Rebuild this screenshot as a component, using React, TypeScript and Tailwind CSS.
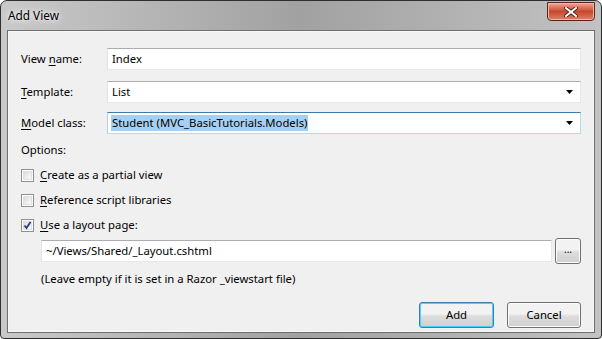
import React from 'react'

const font = { fontFamily: '"Noto Sans", "Open Sans", sans-serif' }

const Key = ({ children }: { children: React.ReactNode }) => <span className="underline underline-offset-2">{children}</span>

const Arrow = () => (
  <svg width="7" height="4" viewBox="0 0 7 4" className="absolute right-[7px] top-1/2 -translate-y-1/2">
    <path d="M0 0h7L3.5 4z" fill="#000" />
  </svg>
)

const Field = ({ label, children, focused, combo }: { label: React.ReactNode; children: React.ReactNode; focused?: boolean; combo?: boolean }) => (
  <div className="flex items-center h-[22px]">
    <div className="w-[86px] shrink-0">{label}</div>
    <div
      className={
        'relative flex-1 h-[22px] bg-white flex items-center pl-[4px] border ' +
        (focused
          ? 'border-[#3d7bad] border-b-[#b7d9ed] border-r-[#b7d9ed] border-l-[#b5cfe7]'
          : 'border-[#abadb3] border-b-[#e3e9ef] border-r-[#e3e9ef] border-l-[#e2e3ea]')
      }
    >
      {children}
      {combo && <Arrow />}
    </div>
  </div>
)

const Check = ({ checked, children }: { checked?: boolean; children: React.ReactNode }) => (
  <div className="flex items-center h-[25px] gap-[6px]">
    <div className="w-[13px] h-[13px] border border-[#8e8f8f] bg-white p-[1px]">
      <div className="w-full h-full bg-gradient-to-br from-[#dcdcdc] to-[#fbfbfb] border border-[#e0e0e0] relative">
        {checked && (
          <svg width="11" height="11" viewBox="0 0 11 11" className="absolute -left-[2px] -top-[2px]">
            <path d="M2.5 5.5l2 2.5L8.5 2" stroke="#2a3b7c" strokeWidth="1.8" fill="none" />
          </svg>
        )}
      </div>
    </div>
    <span>{children}</span>
  </div>
)

const Btn = ({ children, def, w }: { children: React.ReactNode; def?: boolean; w: string }) => (
  <div
    className={
      w +
      ' h-[26px] rounded-[3px] border flex items-center justify-center bg-gradient-to-b from-[#f2f2f2] from-45% via-[#dddddd] via-55% to-[#cfcfcf] ' +
      (def ? 'border-[#3c7fb1] shadow-[inset_0_0_0_1px_#48d1ff]' : 'border-[#707070] shadow-[inset_0_0_0_1px_#fcfcfc]')
    }
  >
    {children}
  </div>
)

export default function App() {
  return (
    <div className="w-[602px] h-[339px] bg-white text-[11.3px] text-black" style={font}>
      <div className="w-[602px] h-[339px] rounded-t-[7px] rounded-b-[4px] border border-[#2e2e2e] bg-gradient-to-r from-[#c9c9c9] via-[#a1a1a1] to-[#c2c2c2] flex flex-col px-[6px] pb-[5px]">
        <div className="h-[29px] flex items-start justify-between shrink-0">
          <div className="pt-[6px] pl-[1px] text-[11.8px] text-black [text-shadow:0_0_8px_#ffffff,0_0_4px_#ffffff]">Add View</div>
          <div className="mt-[1px] w-[48px] h-[19px] rounded-b-[4px] border border-[#5a2419] bg-gradient-to-b from-[#e9a995] via-[#c8452a] to-[#d9826a] flex items-center justify-center shadow-[inset_0_0_0_1px_#f0b8a8]">
            <svg width="14" height="10" viewBox="0 0 14 10">
              <path d="M2 1l5 4l5-4M2 9l5-4l5 4" stroke="#3a1a14" strokeWidth="3.6" fill="none" strokeLinecap="square" />
              <path d="M2 1l5 4l5-4M2 9l5-4l5 4" stroke="#ffffff" strokeWidth="2" fill="none" strokeLinecap="square" />
            </svg>
          </div>
        </div>
        <div className="flex-1 border border-[#6e6e6e] bg-[#f0f0f0] shadow-[inset_0_0_0_1px_#f8f8f8]">
          <div className="pl-[13px] pr-[13px] pt-[17px] flex flex-col">
            <Field label={<>View <Key>n</Key>ame:</>}>Index</Field>
            <div className="h-[11px]" />
            <Field label={<><Key>T</Key>emplate:</>} combo>List</Field>
            <div className="h-[9px]" />
            <Field label={<><Key>M</Key>odel class:</>} combo focused>
              <span className="bg-[#a6d0f2] -ml-[1px] pl-[1px] pr-[1px]">Student (MVC_BasicTutorials.Models)</span>
            </Field>
            <div className="h-[7px]" />
            <div className="h-[18px] flex items-center">Options:</div>
            <div className="h-[4px]" />
            <Check>
              <Key>C</Key>reate as a partial view
            </Check>
            <Check>
              <Key>R</Key>eference script libraries
            </Check>
            <Check checked>
              <Key>U</Key>se a layout page:
            </Check>
            <div className="pl-[20px] flex items-center gap-[3px]">
              <div className="flex-1 h-[22px] bg-white border border-[#abadb3] border-b-[#e3e9ef] border-r-[#e3e9ef] border-l-[#e2e3ea] flex items-center pl-[4px]">
                ~/Views/Shared/_Layout.cshtml
              </div>
              <Btn w="w-[26px]">
                <span className="text-[10px] leading-none -mt-[4px]">...</span>
              </Btn>
            </div>
            <div className="pl-[20px] h-[18px] mt-[6px] flex items-center">(Leave empty if it is set in a Razor _viewstart file)</div>
            <div className="flex justify-end gap-[13px] mt-[14px]">
              <Btn w="w-[75px]" def>
                Add
              </Btn>
              <Btn w="w-[74px]">Cancel</Btn>
            </div>
          </div>
        </div>
      </div>
    </div>
  )
}
